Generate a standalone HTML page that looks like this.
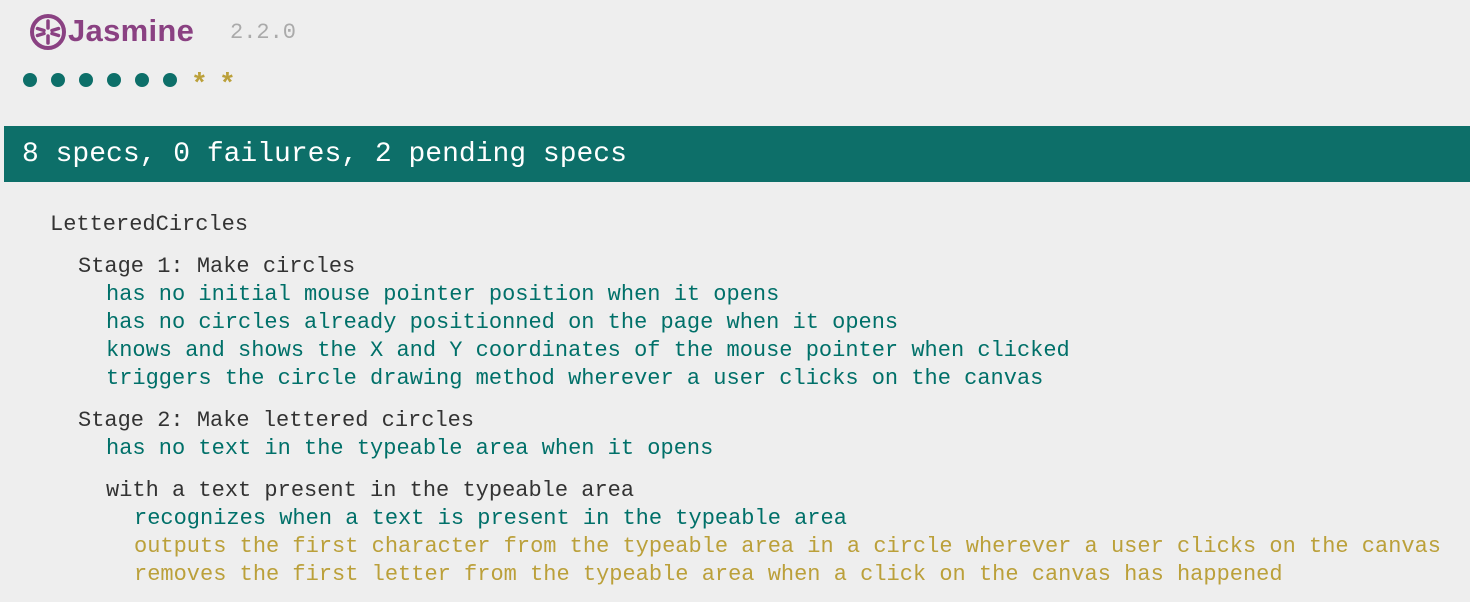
<!DOCTYPE html>
<html><head><meta charset="utf-8"><style>
html,body{margin:0;padding:0;background:#eee;width:1470px;height:602px;overflow:hidden;font-family:"Liberation Mono",monospace;}
.a{position:absolute;white-space:pre;line-height:28px;font-size:22px;}
.g{color:#007069}.y{color:#bba03a}.k{color:#333}
.dot{position:absolute;top:73px;width:14px;height:14px;border-radius:50%;background:#0d6f69}
.st{position:absolute;top:70px;font-size:28px;font-weight:bold;color:#bba03a;font-family:"Liberation Mono",monospace}
</style></head><body>
<svg style="position:absolute;left:29px;top:13px" width="38" height="38" viewBox="0 0 38 38">
<circle cx="19" cy="19" r="16" fill="none" stroke="#8a4182" stroke-width="4"/>
<g stroke="#8a4182" stroke-width="3.5" stroke-linecap="round">
<line x1="19" y1="8" x2="19" y2="15"/><line x1="19" y1="23" x2="19" y2="30"/>
<line x1="8.5" y1="15.5" x2="15" y2="17.5"/><line x1="23" y1="20.5" x2="29.5" y2="22.5"/>
<line x1="29.5" y1="15.5" x2="23" y2="17.5"/><line x1="15" y1="20.5" x2="8.5" y2="22.5"/>
</g></svg>
<div style="position:absolute;left:68px;top:13px;font-family:'Liberation Sans',sans-serif;font-weight:bold;font-size:31px;color:#8a4182;letter-spacing:0.3px">Jasmine</div>
<div style="position:absolute;left:230px;top:20px;font-size:22px;color:#aaa;font-family:'Liberation Mono',monospace">2.2.0</div>
<div class="dot" style="left:23px"></div><div class="dot" style="left:51px"></div><div class="dot" style="left:79px"></div><div class="dot" style="left:107px"></div><div class="dot" style="left:135px"></div><div class="dot" style="left:163px"></div>
<div class="st" style="left:191px">*</div><div class="st" style="left:219px">*</div>
<div style="position:absolute;left:4px;top:126px;width:1466px;height:56px;background:#0d6f69;color:#fff;font-size:28px;line-height:56px;padding-left:18px;padding-top:1px;box-sizing:border-box;white-space:pre">8 specs, 0 failures, 2 pending specs</div>
<div class="a k" style="left:50px;top:211px">LetteredCircles</div>
<div class="a k" style="left:78px;top:253px">Stage 1: Make circles</div>
<div class="a g" style="left:106px;top:281px">has no initial mouse pointer position when it opens</div>
<div class="a g" style="left:106px;top:309px">has no circles already positionned on the page when it opens</div>
<div class="a g" style="left:106px;top:337px">knows and shows the X and Y coordinates of the mouse pointer when clicked</div>
<div class="a g" style="left:106px;top:365px">triggers the circle drawing method wherever a user clicks on the canvas</div>
<div class="a k" style="left:78px;top:407px">Stage 2: Make lettered circles</div>
<div class="a g" style="left:106px;top:435px">has no text in the typeable area when it opens</div>
<div class="a k" style="left:106px;top:477px">with a text present in the typeable area</div>
<div class="a g" style="left:134px;top:505px">recognizes when a text is present in the typeable area</div>
<div class="a y" style="left:134px;top:533px">outputs the first character from the typeable area in a circle wherever a user clicks on the canvas</div>
<div class="a y" style="left:134px;top:561px">removes the first letter from the typeable area when a click on the canvas has happened</div>
</body></html>
